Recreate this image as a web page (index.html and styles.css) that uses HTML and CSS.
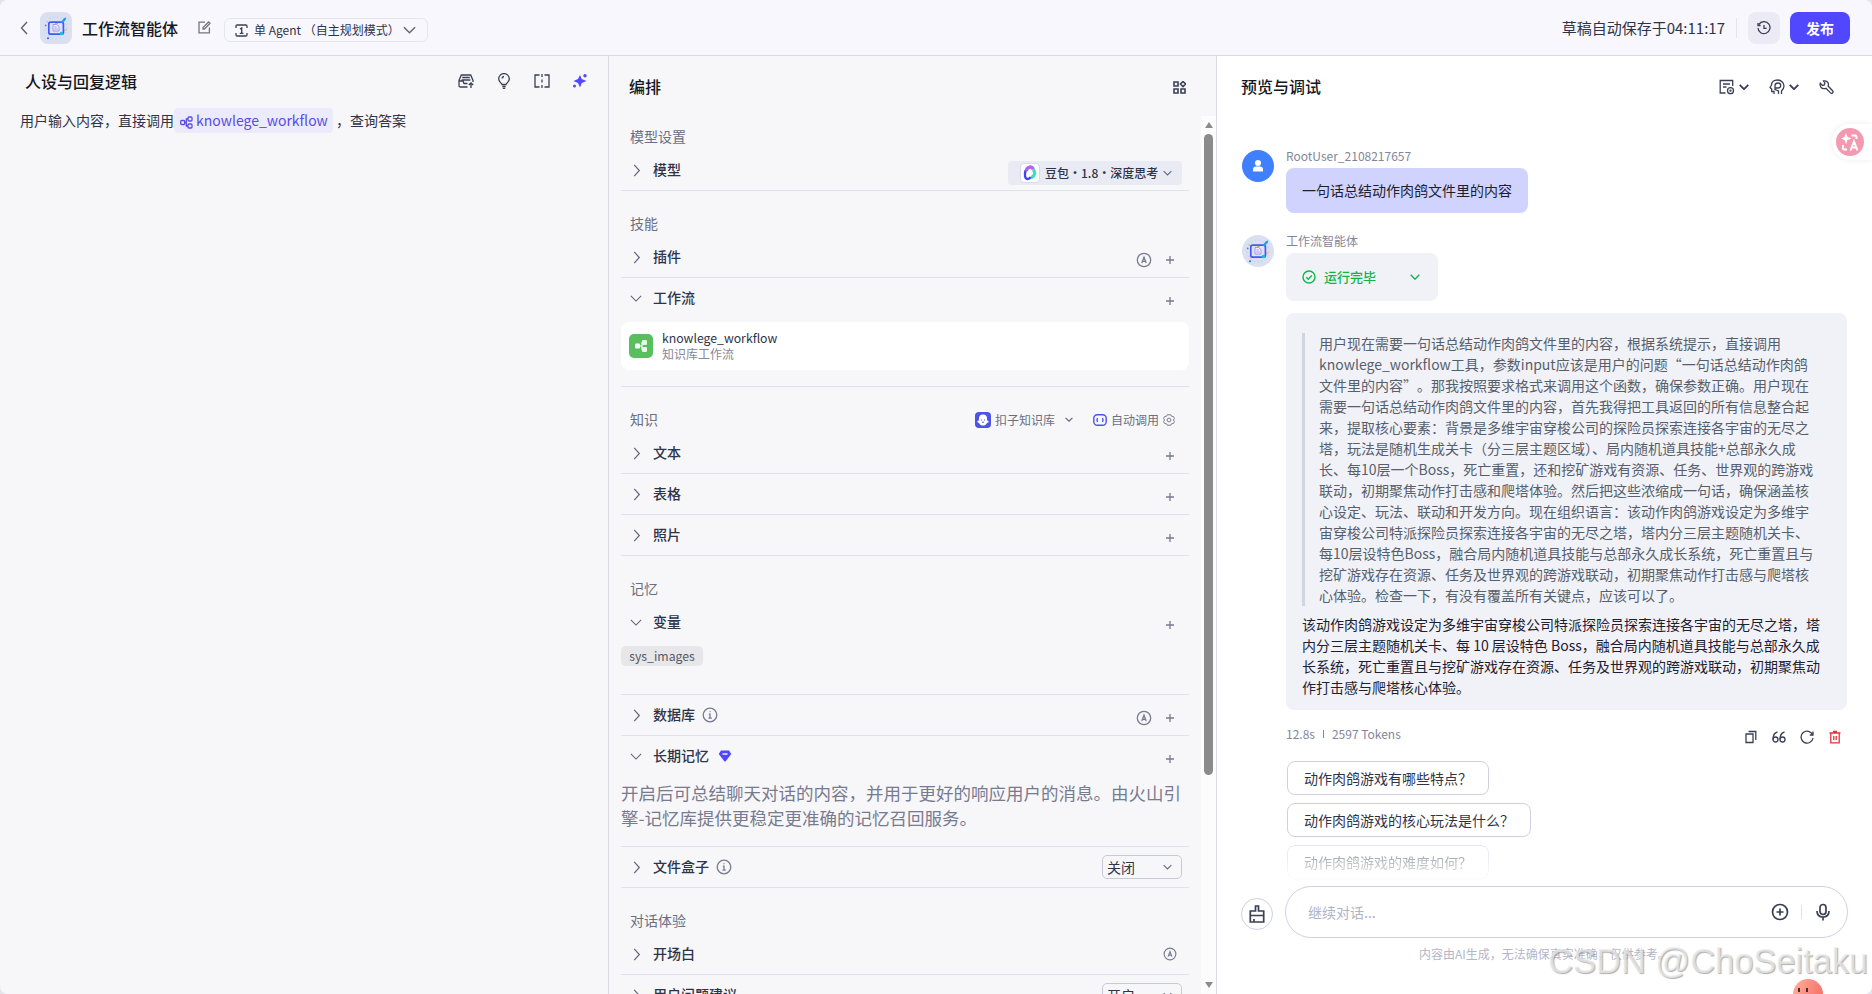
FILE: index.html
```html
<!DOCTYPE html>
<html lang="zh-CN">
<head>
    <meta charset="UTF-8">
    <meta name="viewport" content="width=device-width, initial-scale=1.0">
    <title>工作流智能体</title>
    <link rel="stylesheet" href="styles.css">
</head>
<body>
    <svg class="sprite" width="0" height="0">
        <symbol id="right" viewBox="0 0 8 14"><path d="M1 1l5.500 6L1 13"/></symbol>
        <symbol id="down" viewBox="0 0 14 8"><path d="M1 1l6 6 6-6"/></symbol>
        <symbol id="plus" viewBox="0 0 8 8"><path d="M4 0v8M0 4h8"/></symbol>
        <symbol id="auto" viewBox="0 0 16 16"><circle cx="8" cy="8" r="6.700"/><path d="M5.800 11L8 5.200l2.200 5.800M6.500 9.300h3"/></symbol>
        <symbol id="info" viewBox="0 0 16 16"><circle cx="8" cy="8" r="6.800"/><path d="M6.800 7.200H8v4M6.400 11.200h3.400M7.600 4.700h1"/></symbol>
        <symbol id="robot" viewBox="0 0 32 32">
            <circle cx="16" cy="16" r="11" stroke="#bcc5ef" stroke-width=".6" stroke-dasharray="2 2"/>
            <path d="M6.500 9.500l2 1M24 18.500l3-1" stroke="#e9b66b"/>
            <rect x="8.800" y="10.200" width="14.600" height="12" rx="2" fill="#dfe2ff" stroke="#4159f5" stroke-width="1.700"/>
            <path d="M13 12.500h3.500l2.500 2v4.500h-6z" fill="#f3f0ff" stroke="#8c86da" stroke-width=".8"/>
            <path d="M14.300 15h2.500M14.300 17h3.500" stroke="#8c86da" stroke-width=".8"/>
            <path d="M15 11.500h3" stroke="#f4a84d" stroke-width="1.200"/>
            <path d="M20.500 10.500l3.500-4.500 2.300-.5-.7 2.600-3.300 3.200z" fill="#1c9df0"/>
            <circle cx="21.500" cy="21.500" r="1.800" fill="#17c0dc"/>
            <circle cx="8" cy="26.300" r="1" fill="#4159f5"/><circle cx="5.700" cy="13.400" r=".9" fill="#4b87f5"/>
        </symbol>
    </svg>
    <div class="app">
        <header class="header">
            <svg class="ico back" width="8" height="14"><use href="#right"/></svg>
            <span class="logo"><svg width="32" height="32" fill="none"><use href="#robot"/></svg></span>
            <h1>工作流智能体</h1>
            <svg class="ico edit" width="13" height="13" viewBox="0 0 13 13"><path d="M7 1.200H1v10.600h10.400V6.500M5 8V6.600L10.600 1l1.400 1.300L6.500 8z"/></svg>
            <div class="mode">
                <svg class="ico" width="13" height="13" viewBox="0 0 13 13"><path d="M1 4V2.200Q1 1 2.200 1h8.600Q12 1 12 2.200V4M1 9v1.800Q1 12 2.200 12h8.600q1.200 0 1.200-1.200V9M5 5l1.700-1v5.200M4.800 9.300h3.600"/></svg>
                <span>单 Agent （自主规划模式）</span>
                <svg class="ico chev" width="13" height="8"><use href="#down"/></svg>
            </div>
            <span class="saved">草稿自动保存于04:11:17</span>
            <i class="bar"></i>
            <div class="history"><svg class="ico" width="14" height="14" viewBox="0 0 14 14"><path d="M2 3.300A6 6 0 1 1 1 7M1 2v2.500h2.600M7 4v3.300h2.600"/></svg></div>
            <div class="publish">发布</div>
        </header>

        <main class="main">
            <section class="prompt">
                <div class="prompt-head">
                    <h2>人设与回复逻辑</h2>
                    <svg class="ico" width="16" height="16" viewBox="0 0 16 16"><path d="M9.500 14H2.500Q1 14 1 12.500V7.500L3.300 2h9.400L15 7.500v1.500M1 8h4l1 2.500h3.500M4.200 4.500h7.600M3.600 7h8.800M13 15V10M10.800 12L13 9.800l2.200 2.200"/></svg>
                    <svg class="ico" width="16" height="16" viewBox="0 0 16 16"><path d="M6 11.500C5.500 10 2.700 8.700 2.700 5.900a5.300 5.300 0 0 1 10.600 0c0 2.800-2.800 4.100-3.300 5.600zM6.300 13.500h3.400M6.800 15.300h2.400M6 5.500q.2-1.700 2-2"/></svg>
                    <svg class="ico" width="16" height="16" viewBox="0 0 16 16"><path d="M5.500 2H1v12h4.500M10.500 2H15v12h-4.500M8 1v3M8 6.500v3M8 12v3"/></svg>
                    <svg class="spark" width="16" height="16" viewBox="0 0 16 16"><path d="M8 2l1.700 4.100L14.500 8 9.700 10 8 14.500 6 10 1.500 8 6 6.100z"/><circle cx="13" cy="2.800" r="1.700"/><circle cx="2.500" cy="13" r="1.500"/></svg>
                </div>
                <p>用户输入内容，直接调用<span class="chip"><svg class="ico" width="13" height="13" viewBox="0 0 13 13"><rect x=".7" y="4.500" width="4" height="4" rx="1"/><rect x="8" y="1" width="4" height="4" rx="1"/><rect x="8" y="8" width="4" height="4" rx="1"/><path d="M4.700 6.500h1.600V3H8M6.300 6.500V10H8"/></svg>knowlege_workflow</span>，查询答案</p>
            </section>

            <section class="arrange">
                <div class="arrange-head">
                    <h2>编排</h2>
                    <svg class="ico" width="13" height="13" viewBox="0 0 13 13"><path d="M1 1h4v4H1zM1 8h4v4H1zM8 8h4v4H8zM10 .5L12.500 3 10 5.500 7.500 3z"/></svg>
                </div>
                <div class="scroll">
                    <div class="list">
                        <div class="label first">模型设置</div>
                        <div class="row">
                            <svg class="ico fold" width="14" height="13"><use href="#right"/></svg><b>模型</b>
                            <div class="model">
                                <span class="model-logo"><svg width="14" height="16" viewBox="0 0 14 16" fill="none"><path d="M3.200 6C4 1.500 9.500.5 10 4.500" stroke="#b85cf6" stroke-width="3.400"/><path d="M10 4.500c3 2.500 1.500 7-2 8" stroke="#3bdcc0" stroke-width="3.200"/><path d="M2.600 5.500c-1.500 4.500-.5 8.500 2 8.500 1.500 0 2.500-1 3-2" stroke="#3d46f4" stroke-width="2.400"/></svg></span>
                                <span>豆包・1.8・深度思考</span>
                                <svg class="ico chev" width="9" height="6"><use href="#down"/></svg>
                            </div>
                        </div>
                        <div class="label">技能</div>
                        <div class="row">
                            <svg class="ico fold" width="14" height="13"><use href="#right"/></svg><b>插件</b>
                            <div class="acts"><svg class="ico" width="16" height="16"><use href="#auto"/></svg><svg class="ico" width="8" height="8"><use href="#plus"/></svg></div>
                        </div>
                        <div class="row open">
                            <svg class="ico fold" width="12" height="7"><use href="#down"/></svg><b>工作流</b>
                            <div class="acts"><svg class="ico" width="8" height="8"><use href="#plus"/></svg></div>
                        </div>
                        <div class="flow">
                            <div class="card">
                                <span class="flow-logo"><svg width="14" height="14" viewBox="0 0 14 14"><path d="M5 7h3M8 3v8" stroke="#d9f4da" stroke-width="1.300"/><rect x="1" y="4.500" width="5" height="5" rx="1"/><rect x="8" y="1" width="5" height="5" rx="1" opacity=".85"/><rect x="8" y="8" width="5" height="5" rx="1" opacity=".85"/></svg></span>
                                <div><div class="flow-name">knowlege_workflow</div><div class="flow-desc">知识库工作流</div></div>
                            </div>
                        </div>
                        <div class="label">知识
                            <div class="know">
                                <span class="know-logo"><svg width="14" height="14" viewBox="0 0 14 14"><path fill="#fff" d="M7 1.500a4 4 0 0 1 4 4v2q1.700 0 1.700 1T11 10c-1 2-2.200 2.500-4 2.500S4 12 3 10q-1.700-.5-1.700-1.500t1.700-1v-2a4 4 0 0 1 4-4z"/><path d="M5.500 6.500v1M8.500 6.500v1M6 9q1 .8 2 0" stroke="#4d53e8" fill="none"/></svg></span>
                                <span>扣子知识库</span>
                                <svg class="ico kchev" width="8" height="5"><use href="#down"/></svg>
                                <svg class="call" width="14" height="12" viewBox="0 0 14 12"><rect x=".8" y=".8" width="12.400" height="10.400" rx="3.500"/><path d="M4.500 4Q3.500 6 4.500 8M9.500 4q1 2 0 4"/></svg>
                                <span>自动调用</span>
                                <svg class="ico gear" width="12" height="12" viewBox="0 0 12 12"><path d="M4.200.8h3.600l.8 1.500 1.800.2 1 1.800-.9 1.700.9 1.700-1 1.800-1.800.2-.8 1.500H4.200l-.8-1.500-1.800-.2-1-1.800L1.500 6 .6 4.300l1-1.800 1.800-.2z"/><circle cx="6" cy="6" r="1.900"/></svg>
                            </div>
                        </div>
                        <div class="row">
                            <svg class="ico fold" width="14" height="13"><use href="#right"/></svg><b>文本</b>
                            <div class="acts"><svg class="ico" width="8" height="8"><use href="#plus"/></svg></div>
                        </div>
                        <div class="row">
                            <svg class="ico fold" width="14" height="13"><use href="#right"/></svg><b>表格</b>
                            <div class="acts"><svg class="ico" width="8" height="8"><use href="#plus"/></svg></div>
                        </div>
                        <div class="row">
                            <svg class="ico fold" width="14" height="13"><use href="#right"/></svg><b>照片</b>
                            <div class="acts"><svg class="ico" width="8" height="8"><use href="#plus"/></svg></div>
                        </div>
                        <div class="label">记忆</div>
                        <div class="row open">
                            <svg class="ico fold" width="12" height="7"><use href="#down"/></svg><b>变量</b>
                            <div class="acts"><svg class="ico" width="8" height="8"><use href="#plus"/></svg></div>
                        </div>
                        <div class="vars"><span>sys_images</span></div>
                        <div class="row">
                            <svg class="ico fold" width="14" height="13"><use href="#right"/></svg><b>数据库</b>
                            <svg class="ico tip" width="16" height="16"><use href="#info"/></svg>
                            <div class="acts"><svg class="ico" width="16" height="16"><use href="#auto"/></svg><svg class="ico" width="8" height="8"><use href="#plus"/></svg></div>
                        </div>
                        <div class="row open">
                            <svg class="ico fold" width="12" height="7"><use href="#down"/></svg><b>长期记忆</b>
                            <svg class="gem" width="14" height="12" viewBox="0 0 14 12"><path fill="#5147ff" d="M3 .5h8L13.300 4 7.500 11.500h-1L.7 4z"/><path d="M4.500 4h5" stroke="#fff" stroke-width="1.400"/></svg>
                            <div class="acts"><svg class="ico" width="8" height="8"><use href="#plus"/></svg></div>
                        </div>
                        <p class="memo">开启后可总结聊天对话的内容，并用于更好的响应用户的消息。由火山引<br>擎-记忆库提供更稳定更准确的记忆召回服务。</p>
                        <div class="row">
                            <svg class="ico fold" width="14" height="13"><use href="#right"/></svg><b>文件盒子</b>
                            <svg class="ico tip" width="16" height="16"><use href="#info"/></svg>
                            <div class="select">关闭<svg class="ico chev" width="9" height="6"><use href="#down"/></svg></div>
                        </div>
                        <div class="label">对话体验</div>
                        <div class="row">
                            <svg class="ico fold" width="14" height="13"><use href="#right"/></svg><b>开场白</b>
                            <div class="acts small"><svg class="ico" width="14" height="14"><use href="#auto"/></svg></div>
                        </div>
                        <div class="row">
                            <svg class="ico fold" width="14" height="13"><use href="#right"/></svg><b>用户问题建议</b>
                            <div class="select">开启<svg class="ico chev" width="9" height="6"><use href="#down"/></svg></div>
                        </div>
                    </div>
                    <div class="track">
                        <i class="up"></i>
                        <i class="thumb"></i>
                        <i class="dn"></i>
                    </div>
                </div>
            </section>

            <section class="preview">
                <div class="preview-head">
                    <h2>预览与调试</h2>
                    <svg class="ico" width="16" height="16" viewBox="0 0 16 16"><path d="M6.500 14H1.200V1.500h12.500V7M4 5h7M4 8h3.500"/><circle cx="11.500" cy="11.700" r="3"/><circle cx="11.500" cy="11.700" r=".5"/></svg>
                    <svg class="ico dark" width="10" height="6"><use href="#down"/></svg>
                    <svg class="ico head" width="16" height="16" viewBox="0 0 16 16"><path d="M5 15v-2.500H2.700V10L1 8.500 2.500 6C2.500 3 5 1 8.500 1S15 3.500 15 7c0 2.500-1.500 4-2.500 5v3M9.500 15v-3L6 10.500V6.300q.3-2.300 3-2.300t2.700 2.500T9 9H6"/></svg>
                    <svg class="ico dark" width="10" height="6"><use href="#down"/></svg>
                    <svg class="ico tool" width="15" height="15" viewBox="0 0 15 15"><path d="M4.500 1q3-.8 4.500 1.700.8 1.600.1 3.300l4.700 5q.7 1-.3 2t-2-.1L7 8.300Q3.500 9.500 1.700 6.800.7 5 1.300 3.200L3.500 5.500 5.300 5l.6-1.800z"/></svg>
                </div>
                <div class="chat">
                    <div class="msg">
                        <span class="avatar user"><svg width="10" height="14" viewBox="0 0 10 14"><circle cx="5" cy="4" r="3"/><path d="M0 12V10.500Q0 7.500 3 7.500h4q3 0 3 3V12q0 .5-.5.5h-9Q0 12.500 0 12z"/></svg></span>
                        <div>
                            <div class="name">RootUser_2108217657</div>
                            <div class="bubble">一句话总结动作肉鸽文件里的内容</div>
                        </div>
                    </div>
                    <div class="msg bot">
                        <span class="avatar"><svg width="32" height="32" fill="none"><use href="#robot"/></svg></span>
                        <div>
                            <div class="name">工作流智能体</div>
                            <div class="done">
                                <svg width="14" height="14" viewBox="0 0 14 14"><circle cx="7" cy="7" r="6"/><path d="M4.300 7.200l2 2 3.500-3.700"/></svg>
                                <span>运行完毕</span>
                                <svg class="more" width="10" height="6"><use href="#down"/></svg>
                            </div>
                            <div class="answer">
                                <blockquote>用户现在需要一句话总结动作肉鸽文件里的内容，根据系统提示，直接调用<br>knowlege_workflow工具，参数input应该是用户的问题“一句话总结动作肉鸽<br>文件里的内容<span class="wide">”。</span>那我按照要求格式来调用这个函数，确保参数正确。用户现在<br>需要一句话总结动作肉鸽文件里的内容，首先我得把工具返回的所有信息整合起<br>来，提取核心要素：背景是多维宇宙穿梭公司的探险员探索连接各宇宙的无尽之<br>塔，玩法是随机生成关卡（分三层主题区域）、局内随机道具技能+总部永久成<br>长、每10层一个Boss，死亡重置，还和挖矿游戏有资源、任务、世界观的跨游戏<br>联动，初期聚焦动作打击感和爬塔体验。然后把这些浓缩成一句话，确保涵盖核<br>心设定、玩法、联动和开发方向。现在组织语言：该动作肉鸽游戏设定为多维宇<br>宙穿梭公司特派探险员探索连接各宇宙的无尽之塔，塔内分三层主题随机关卡、<br>每10层设特色Boss，融合局内随机道具技能与总部永久成长系统，死亡重置且与<br>挖矿游戏存在资源、任务及世界观的跨游戏联动，初期聚焦动作打击感与爬塔核<br>心体验。检查一下，有没有覆盖所有关键点，应该可以了。</blockquote>
                                <p>该动作肉鸽游戏设定为多维宇宙穿梭公司特派探险员探索连接各宇宙的无尽之塔，塔<br>内分三层主题随机关卡、每 10 层设特色 Boss，融合局内随机道具技能与总部永久成<br>长系统，死亡重置且与挖矿游戏存在资源、任务及世界观的跨游戏联动，初期聚焦动<br>作打击感与爬塔核心体验。</p>
                            </div>
                            <div class="meta">
                                <span>12.8s</span><i></i><span>2597 Tokens</span>
                                <div class="tools">
                                    <svg class="ico" width="14" height="14" viewBox="0 0 14 14"><path d="M2 4h7v8.500H2zM4.500 1.500h7.300V10"/></svg>
                                    <svg class="ico" width="14" height="14" viewBox="0 0 14 14"><path d="M5.500 2Q1 3 1 9.500"/><circle cx="3.500" cy="9.500" r="2.500"/><path d="M12.500 2Q8 3 8 9.500"/><circle cx="10.500" cy="9.500" r="2.500"/></svg>
                                    <svg class="ico" width="14" height="14" viewBox="0 0 14 14"><path d="M12.700 5A6 6 0 1 0 13 8M13 1.500V5H9.800"/></svg>
                                    <svg class="ico red" width="14" height="14" viewBox="0 0 14 14"><path d="M1.500 3h11M5 1.500h4M2.800 3v9.800h8.400V3M5.800 6v4M8.200 6v4"/></svg>
                                </div>
                            </div>
                            <div class="ask">动作肉鸽游戏有哪些特点？</div>
                            <div class="ask">动作肉鸽游戏的核心玩法是什么？</div>
                            <div class="ask fade">动作肉鸽游戏的难度如何？</div>
                        </div>
                    </div>
                </div>
                <div class="send">
                    <span class="clear"><svg class="ico" width="16" height="18" viewBox="0 0 16 18"><path d="M6.500 6V1h3v5h5.200v11H1.300V6zM1.300 10.500h13.400M5 17v-3"/></svg></span>
                    <div class="input">
                        <span>继续对话...</span>
                        <svg class="ico" width="18" height="18" viewBox="0 0 18 18"><circle cx="9" cy="9" r="7.500"/><path d="M9 5.500v7M5.500 9h7"/></svg>
                        <i></i>
                        <svg class="ico" width="16" height="18" viewBox="0 0 16 18"><rect x="5" y="1.500" width="6" height="10" rx="3"/><path d="M2 8q0 6 6 6t6-6M8 14v3.500"/></svg>
                    </div>
                </div>
                <div class="notice">内容由AI生成，无法确保真实准确，仅供参考。</div>
            </section>
        </main>
    </div>

    <div class="translate"><svg width="28" height="28" viewBox="0 0 28 28"><circle cx="14" cy="14" r="14" fill="#f49ab0"/><path fill="#fff" d="M10 5l1.500 4L15.500 10.500 11.500 12 10 16l-1.500-4L5 10.500 8.500 9z"/><path d="M15.500 7.500H19q1.500 0 1.500 1.500v2M7 17v3q0 1.500 1.500 1.500H11M14.500 22.500L18 13.500l3.500 9M15.800 19.500h4.500" fill="none" stroke="#fff" stroke-width="2"/></svg></div>
    <div class="pet"><i></i><i></i></div>
    <div class="mark">CSDN @ChoSeitaku</div>
</body>
</html>
```
FILE: styles.css
```css
*{
    margin: 0;
    padding: 0;
    box-sizing: border-box;
}
body{
    width: 1872px;
    height: 994px;
    overflow: hidden;
    position: relative;
    background: #e4e5ea;
    font-family: "Noto Sans CJK SC", sans-serif;
    font-size: 14px;
    color: #2f3348;
}
svg{
    display: block;
    flex: none;
}
.sprite{
    position: absolute;
}
.ico{
    fill: none;
    stroke: #3b3f54;
    stroke-width: 1.3;
}
h1,h2{
    font-size: 16px;
    font-weight: 500;
    line-height: 24px;
    color: #15171f;
    white-space: nowrap;
}
.app{
    height: 994px;
    border-radius: 8px;
    overflow: hidden;
    background: #f7f7fa;
}

/* 顶部栏 */
.header{
    height: 56px;
    display: flex;
    align-items: center;
    padding: 0 22px 0 20px;
    background: #f8f7fd;
    border-bottom: 1px solid #dadbe0;
}
.back{
    transform: scaleX(-1);
    stroke: #5a5d6c;
}
.logo{
    width: 32px;
    height: 32px;
    margin: 0 10px 0 12px;
    border-radius: 8px;
    background: #dae0f0;
}
.edit{
    margin-left: 20px;
    stroke: #72757f;
}
.mode{
    width: 204px;
    height: 24px;
    margin: 5px 0 0 13px;
    padding: 0 11px 0 10px;
    border: 1px solid #e5e5ed;
    border-radius: 6px;
    display: flex;
    align-items: center;
    font-size: 12px;
    line-height: 18px;
    white-space: nowrap;
}
.mode span{
    margin-left: 6px;
    padding-bottom: 1px;
}
.mode .chev{
    margin-left: auto;
}
.chev{
    stroke: #62667c;
    stroke-width: 1.6;
}
.saved{
    margin-left: auto;
    font-size: 15px;
}
.bar{
    width: 1px;
    height: 20px;
    margin: 0 11px;
    background: #e4e4ec;
}
.history{
    width: 32px;
    height: 32px;
    border-radius: 8px;
    background: #ecebf5;
    display: flex;
    align-items: center;
    justify-content: center;
}
.publish{
    width: 60px;
    height: 32px;
    margin-left: 10px;
    border-radius: 8px;
    background: #5147ff;
    color: #fff;
    font-weight: 700;
    line-height: 32px;
    text-align: center;
}
.main{
    height: 938px;
    display: flex;
}

/* 人设 */
.prompt{
    width: 609px;
    border-right: 1px solid #dadbe0;
}
.prompt-head{
    display: flex;
    align-items: center;
    gap: 22px;
    height: 38px;
    padding: 12px 20px 0 25px;
}
.prompt-head h2{
    margin: -1px auto 0 0;
}
.spark{
    fill: #5147ff;
}
.prompt p{
    display: flex;
    align-items: center;
    margin: 14px 0 0 20px;
    height: 25px;
    line-height: 25px;
}
.chip{
    width: 159px;
    height: 25px;
    margin-right: 3px;
    padding-left: 6px;
    border-radius: 4px;
    background: #ebebfb;
    color: #5a4be0;
    display: flex;
    align-items: center;
    gap: 3px;
}
.chip .ico{
    margin-top: 4px;
    stroke: #5a4be0;
}

/* 编排 */
.arrange{
    width: 608px;
    border-right: 1px solid #dadbe0;
}
.arrange-head{
    height: 60px;
    display: flex;
    align-items: center;
    justify-content: space-between;
    padding: 2px 30px 0 20px;
}
.arrange-head h2{
    margin-top: -2px;
}
.arrange-head .ico{
    stroke-width: 1.6;
}
.scroll{
    height: 878px;
    display: flex;
    overflow: hidden;
}
.list{
    width: 568px;
    margin: 0 12px;
    flex: none;
}
.label{
    height: 46px;
    padding: 19px 0 0 9px;
    line-height: 26px;
    color: #6b6f83;
    display: flex;
    justify-content: space-between;
}
.label.first{
    height: 34px;
    padding-top: 7px;
}
.row{
    height: 41px;
    padding: 0 7px 0 9px;
    border-bottom: 1px solid #e0e1ed;
    display: flex;
    align-items: center;
}
.row.open{
    height: 40px;
    border: 0;
}
.row b{
    padding-bottom: 2px;
    font-weight: 500;
    line-height: 20px;
    white-space: nowrap;
}
.fold{
    margin-right: 9px;
    stroke: #62667c;
}
.open .fold{
    margin-right: 11px;
}
.tip{
    margin-left: 7px;
    stroke: #777b90;
}
.gem{
    margin-left: 9px;
}
.acts{
    margin: 5px 8px 0 auto;
    display: flex;
    align-items: center;
    gap: 14px;
}
.acts .ico{
    stroke: #777b90;
}
.acts.small{
    margin: 0 5px 0 auto;
}
.model{
    width: 174px;
    height: 24px;
    margin: 6px 0 0 auto;
    padding: 0 10px 0 12px;
    border-radius: 4px;
    background: #e8ebf3;
    display: flex;
    align-items: center;
    font-size: 12px;
    font-weight: 500;
    line-height: 18px;
    white-space: nowrap;
}
.model-logo{
    width: 20px;
    height: 20px;
    margin-right: 5px;
    padding: 1px 2px;
    border: 1px solid #d8dbee;
    border-radius: 4px;
    background: #fff;
}
.model .chev{
    margin-left: auto;
}
.flow{
    padding: 4px 0 16px;
    border-bottom: 1px solid #e0e1ed;
}
.card{
    height: 48px;
    padding-left: 8px;
    border-radius: 8px;
    background: #fff;
    display: flex;
    align-items: center;
    gap: 9px;
}
.flow-logo{
    width: 24px;
    height: 24px;
    padding: 5px;
    border-radius: 5px;
    background: #59bf5e;
    fill: #fff;
}
.flow-name{
    font-size: 12.25px;
    line-height: 16px;
}
.flow-desc{
    font-size: 12px;
    line-height: 16px;
    color: #858899;
}
.know{
    display: flex;
    align-items: center;
    margin-right: 14px;
    font-size: 12px;
}
.know-logo{
    width: 16px;
    height: 16px;
    margin-right: 4px;
    padding: 1px;
    border-radius: 4px;
    background: #4d53e8;
}
.kchev{
    margin: 0 20px 0 10px;
    stroke-width: 2;
    stroke: #62667c;
}
.call{
    margin-right: 4px;
    fill: none;
    stroke: #4d53e8;
    stroke-width: 1.4;
}
.gear{
    margin-left: 4px;
    stroke: #777b90;
    stroke-width: 1;
}
.vars{
    height: 53px;
    padding-top: 4px;
    border-bottom: 1px solid #e0e1ed;
}
.vars span{
    display: block;
    width: 82px;
    height: 20px;
    border-radius: 5px;
    background: #e7e7ea;
    color: #55596b;
    font-size: 12.25px;
    line-height: 20px;
    text-align: center;
}
.memo{
    height: 71px;
    padding-top: 4px;
    border-bottom: 1px solid #e0e1ed;
    font-size: 17.5px;
    line-height: 25px;
    color: #787b8f;
    white-space: nowrap;
}
.select{
    width: 80px;
    height: 24px;
    margin-left: auto;
    padding: 0 9px 0 4px;
    border: 1px solid #c6c9de;
    border-radius: 5px;
    display: flex;
    align-items: center;
    justify-content: space-between;
}
.track{
    width: 15px;
    height: 878px;
    background: #fcfcfc;
    display: flex;
    flex-direction: column;
    align-items: center;
    padding: 6px 0;
}
.up,.dn{
    border: 4px solid transparent;
    border-top: 0;
    border-bottom: 6px solid #8b8b8b;
}
.dn{
    margin-top: auto;
    border-bottom: 0;
    border-top: 6px solid #8b8b8b;
}
.thumb{
    width: 9px;
    height: 641px;
    margin-top: 6px;
    border-radius: 5px;
    background: #8b8b8b;
}

/* 预览与调试 */
.preview{
    flex: 1;
    background: #fff;
}
.preview-head{
    height: 62px;
    display: flex;
    align-items: center;
    padding: 0 38px 0 24px;
}
.preview-head h2{
    margin: -2px auto 0 0;
}
.dark{
    margin-left: 4px;
    stroke-width: 2.6;
}
.head,.tool{
    margin-left: 20px;
}
.chat{
    height: 768px;
    padding: 32px 25px 0 25px;
}
.msg{
    display: flex;
    gap: 12px;
}
.msg > div{
    flex: 1;
}
.bot{
    margin-top: 22px;
}
.avatar{
    width: 32px;
    height: 32px;
    flex: none;
    border-radius: 50%;
    background: #dae0f0;
}
.user{
    background: #4080ff;
    fill: #fff;
    display: flex;
    align-items: center;
    justify-content: center;
}
.name{
    height: 18px;
    font-size: 12px;
    line-height: 12px;
    color: #83869b;
}
.bubble{
    width: 242px;
    height: 45px;
    padding: 0 16px;
    border-radius: 8px;
    background: #d1d3ff;
    color: #1d2030;
    line-height: 45px;
    white-space: nowrap;
}
.done{
    width: 152px;
    height: 48px;
    padding: 0 18px 0 16px;
    border-radius: 8px;
    background: #f1f2f8;
    color: #0fb548;
    font-size: 13px;
    font-weight: 500;
    display: flex;
    align-items: center;
}
.done svg{
    fill: none;
    stroke: #0fb548;
    stroke-width: 1.4;
}
.done .more{
    stroke-width: 2;
}
.done span{
    margin: -2px auto 0 8px;
}
.answer{
    height: 397px;
    margin-top: 12px;
    padding: 20px 16px 12px;
    border-radius: 8px;
    background: #f1f2f8;
    line-height: 21px;
    white-space: nowrap;
    color: #1d2030;
}
.answer blockquote{
    margin-bottom: 8px;
    padding-left: 14px;
    border-left: 3px solid #cfd6df;
    color: #57606a;
}
.wide{
    text-spacing-trim: space-all;
}
.meta{
    height: 51px;
    display: flex;
    align-items: center;
    font-size: 12px;
    color: #83869b;
}
.meta span{
    margin-top: -4px;
}
.meta i{
    width: 1px;
    height: 8px;
    margin: -3px 8px 0;
    background: #83869b;
}
.tools{
    margin: 3px 5px 0 auto;
    display: flex;
    gap: 14px;
}
.red{
    stroke: #e53241;
}
.ask{
    width: fit-content;
    height: 34px;
    margin: 0 0 8px 1px;
    padding: 0 16px;
    border: 1px solid #cfd1e0;
    border-radius: 8px;
    line-height: 32px;
}
.fade{
    -webkit-mask-image: linear-gradient(rgba(0,0,0,.6), rgba(0,0,0,.08));
    mask-image: linear-gradient(rgba(0,0,0,.6), rgba(0,0,0,.08));
}
.send{
    display: flex;
    gap: 12px;
    padding: 0 24px;
}
.clear{
    width: 32px;
    height: 32px;
    margin-top: 12px;
    border: 1px solid #cfd1e0;
    border-radius: 50%;
    display: flex;
    align-items: center;
    justify-content: center;
}
.clear .ico,.input .ico{
    stroke-width: 1.7;
}
.input{
    flex: 1;
    height: 52px;
    padding: 0 16px 0 22px;
    border: 1px solid #cfd1e0;
    border-radius: 26px;
    display: flex;
    align-items: center;
}
.input span{
    margin-right: auto;
    color: #b0b3c8;
}
.input i{
    width: 1px;
    height: 14px;
    margin: 0 13px 0 12px;
    background: #dfe0e8;
}
.notice{
    height: 18px;
    margin-top: 7px;
    padding-left: 202px;
    font-size: 12px;
    line-height: 18px;
    color: #b4b6c8;
}

/* 浮层 */
.translate{
    position: absolute;
    right: 0;
    top: 124px;
    width: 40px;
    height: 36px;
    padding: 4px;
    border-radius: 18px 0 0 18px;
    background: #fff;
    box-shadow: 0 0 6px rgba(0,0,0,.08);
}
.pet{
    position: absolute;
    left: 1793px;
    top: 979px;
    width: 30px;
    height: 30px;
    padding: 9px 0 0 5px;
    border-radius: 50%;
    background: linear-gradient(110deg, #ffb29d, #f5655f);
    display: flex;
    gap: 6px;
}
.pet i{
    width: 2px;
    height: 4px;
    background: #4a2a2a;
}
.mark{
    position: absolute;
    right: 4px;
    bottom: 13px;
    font: 34.4px/40px "Liberation Sans", sans-serif;
    color: rgba(236,236,236,.75);
    text-shadow: 1px 1px 1px rgba(120,120,120,.6);
    white-space: nowrap;
}
```
